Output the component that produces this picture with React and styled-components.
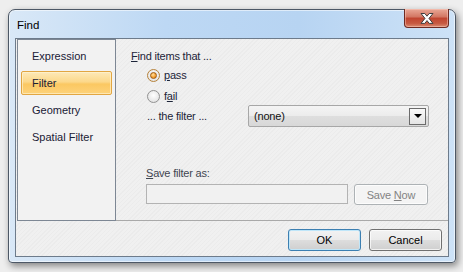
import React from 'react';
import styled, { createGlobalStyle } from 'styled-components';

const GlobalStyle = createGlobalStyle`
	html, body {
		margin: 0;
		padding: 0;
		background: #eeeeee;
	}
	body {
		font-family: "Liberation Sans", Arial, sans-serif;
		font-size: 11px;
		color: #1b2233;
	}
`

const Page = styled.div`
	width: 463px;
	height: 272px;
	padding: 9px 8px 0 8px;
	box-sizing: border-box;
`

const Window = styled.div`
	width: 448px;
	height: 254px;
	box-sizing: border-box;
	border: 1px solid #4d5866;
	border-radius: 7px 7px 4px 4px;
	background: linear-gradient(to right, #d9e8f7 0%, #bdd8f4 35%, #b7d4f2 65%, #cde2f7 100%);
	box-shadow: inset 0 0 0 1px rgba(255, 255, 255, 0.55), 2px 3px 7px rgba(0, 0, 0, 0.45);
	display: flex;
	flex-direction: column;
`

const TitleBar = styled.div`
	height: 28px;
	display: flex;
	justify-content: space-between;
	padding-left: 8px;
	padding-right: 6px;
`

const Title = styled.div`
	align-self: center;
	font-size: 11.5px;
	color: #000;
	margin-top: 1px;
`

const CloseButton = styled.div`
	align-self: flex-start;
	margin-top: -1px;
	width: 45px;
	height: 19px;
	box-sizing: border-box;
	border: 1px solid #6e2a22;
	border-top: none;
	border-radius: 0 0 4px 4px;
	background: linear-gradient(#e9a896 0%, #d27561 45%, #c0442f 50%, #c75a43 80%, #da8c72 100%);
	box-shadow: inset 0 0 0 1px rgba(255, 210, 200, 0.45);
	display: flex;
	align-items: center;
	justify-content: center;
`

const SvgClose = () => (
	<svg width="14" height="11" viewBox="0 0 14 11">
		<path d="M1 0.5h3.8l2.2 2.7 2.2-2.7h3.8l-4 4.9 4 5h-3.8l-2.2-2.8-2.2 2.8h-3.8l4-5z" fill="#fff" stroke="#3f3f3f" strokeWidth="1" strokeLinejoin="round"/>
	</svg>
)

const Client = styled.div`
	margin: 0 6px;
	height: 219px;
	box-sizing: border-box;
	border: 1px solid #6d7b8b;
	background-color: #f0f0f0;
	background-image: repeating-linear-gradient(135deg, rgba(0, 0, 0, 0.018) 0 1px, transparent 1px 3px);
	display: flex;
	flex-direction: column;
`

const TopArea = styled.div`
	height: 182px;
	display: flex;
`

const NavList = styled.div`
	width: 99px;
	margin-left: 1px;
	box-sizing: border-box;
	border: 1px solid #7d8794;
	background: #f2f2f2;
	padding: 4px 3px 0 3px;
	display: flex;
	flex-direction: column;
	gap: 3px;
`

const NavItem = styled.div`
	height: 24px;
	box-sizing: border-box;
	padding-left: 10px;
	display: flex;
	align-items: center;
	font-size: 11px;
	color: #1a2035;
	border: 1px solid ${({ $active }) => ($active ? '#e2a642' : 'transparent')};
	border-radius: 2px;
	background: ${({ $active }) => ($active ? 'linear-gradient(#fde9b8 0%, #fcd88a 45%, #fbc862 55%, #fdd27a 100%)' : 'transparent')};
	box-shadow: ${({ $active }) => ($active ? 'inset 0 0 0 1px rgba(255, 245, 215, 0.6)' : 'none')};
`

const Panel = styled.div`
	flex: 1;
	border-bottom: 1px solid #a9a9a9;
	padding: 10px 0 0 15px;
	display: flex;
	flex-direction: column;
	letter-spacing: -0.2px;
	color: #1c2438;
`

const Label = styled.div`
	height: 14px;
	line-height: 14px;
	margin-top: ${({ $mt }) => $mt || 0}px;
	padding-left: ${({ $indent }) => $indent || 0}px;
	color: ${({ $muted }) => ($muted ? '#3f4550' : 'inherit')};
`

const U = styled.span`
	text-decoration: underline;
	text-underline-offset: 1px;
`

const RadioRow = styled.div`
	height: 20px;
	margin-top: ${({ $mt }) => $mt}px;
	padding-left: 16px;
	display: flex;
	align-items: center;
	gap: 4px;
`

const RadioDot = styled.span`
	width: 13px;
	height: 13px;
	box-sizing: border-box;
	border-radius: 50%;
	border: 1px solid ${({ $checked }) => ($checked ? '#b6823a' : '#929292')};
	background: radial-gradient(circle at 50% 40%, #ffffff 0%, #e6e6e6 70%, #d0d0d0 100%);
	display: flex;
	align-items: center;
	justify-content: center;

	&::after {
		content: '';
		display: ${({ $checked }) => ($checked ? 'block' : 'none')};
		width: 7px;
		height: 7px;
		box-sizing: border-box;
		border-radius: 50%;
		border: 1px solid #9c5a12;
		background: radial-gradient(circle at 40% 35%, #ffe0a0 0%, #f6a234 55%, #d67a10 100%);
	}
`

const FilterRow = styled.div`
	height: 22px;
	margin-top: -1px;
	padding-left: 16px;
	display: flex;
	align-items: center;
`

const FilterLabel = styled.div`
	width: 101px;
`

const Combo = styled.div`
	width: 181px;
	height: 22px;
	box-sizing: border-box;
	border: 1px solid #a7a7a7;
	border-radius: 2px;
	background: linear-gradient(#f4f4f4 0%, #ececec 48%, #dedede 52%, #d8d8d8 100%);
	display: flex;
	align-items: center;
	justify-content: space-between;
	padding: 0 2px 0 5px;
	color: #111;
`

const ComboArrow = styled.div`
	width: 17px;
	height: 17px;
	box-sizing: border-box;
	border: 1px solid #6b6b6b;
	background: linear-gradient(#fafafa, #e4e4e4);
	display: flex;
	align-items: center;
	justify-content: center;

	&::after {
		content: '';
		border-left: 4px solid transparent;
		border-right: 4px solid transparent;
		border-top: 4px solid #000;
	}
`

const SaveRow = styled.div`
	margin-top: 4px;
	padding-left: 15px;
	height: 21px;
	display: flex;
	align-items: flex-start;
	gap: 6px;
`

const TextBox = styled.div`
	width: 202px;
	height: 20px;
	box-sizing: border-box;
	border: 1px solid #b3b3b3;
	background: #f1f1f1;
`

const Button = styled.div`
	width: ${({ $w }) => $w}px;
	height: ${({ $h }) => $h || 22}px;
	box-sizing: border-box;
	border: 1px solid ${({ $default, $disabled }) => ($default ? '#3c7fb1' : $disabled ? '#adb2b5' : '#707070')};
	border-radius: 3px;
	background: ${({ $disabled }) => ($disabled ? '#f4f4f4' : 'linear-gradient(#f2f2f2 0%, #ebebeb 48%, #dddddd 52%, #cfcfcf 100%)')};
	box-shadow: ${({ $default }) => ($default ? 'inset 0 0 0 1px #bfe6f9' : 'inset 0 0 0 1px rgba(255,255,255,0.7)')};
	display: flex;
	align-items: center;
	justify-content: center;
	font-size: 11px;
	color: ${({ $disabled }) => ($disabled ? '#838383' : '#000')};
`

const BottomArea = styled.div`
	flex: 1;
	display: flex;
	justify-content: flex-end;
	align-items: flex-start;
	padding: 8px 6px 0 0;
	gap: 8px;
`

const navItems = ['Expression', 'Filter', 'Geometry', 'Spatial Filter'];

export default function App() {
	return (
		<Page>
			<GlobalStyle />
			<Window>
				<TitleBar>
					<Title>Find</Title>
					<CloseButton><SvgClose /></CloseButton>
				</TitleBar>
				<Client>
					<TopArea>
						<NavList>
							{navItems.map((item) => (
								<NavItem key={item} $active={item === 'Filter'}>{item}</NavItem>
							))}
						</NavList>
						<Panel>
							<Label><U>F</U>ind items that ...</Label>
							<RadioRow $mt={2}>
								<RadioDot $checked />
								<span><U>p</U>ass</span>
							</RadioRow>
							<RadioRow $mt={1}>
								<RadioDot />
								<span>f<U>a</U>il</span>
							</RadioRow>
							<FilterRow>
								<FilterLabel>... the filter ...</FilterLabel>
								<Combo>
									<span>(none)</span>
									<ComboArrow />
								</Combo>
							</FilterRow>
							<Label $mt={39} $indent={15} $muted><U>S</U>ave filter as:</Label>
							<SaveRow>
								<TextBox />
								<Button $w={74} $h={21} $disabled><span>Save <U>N</U>ow</span></Button>
							</SaveRow>
						</Panel>
					</TopArea>
					<BottomArea>
						<Button $w={73} $default>OK</Button>
						<Button $w={73}>Cancel</Button>
					</BottomArea>
				</Client>
			</Window>
		</Page>
	);
}
